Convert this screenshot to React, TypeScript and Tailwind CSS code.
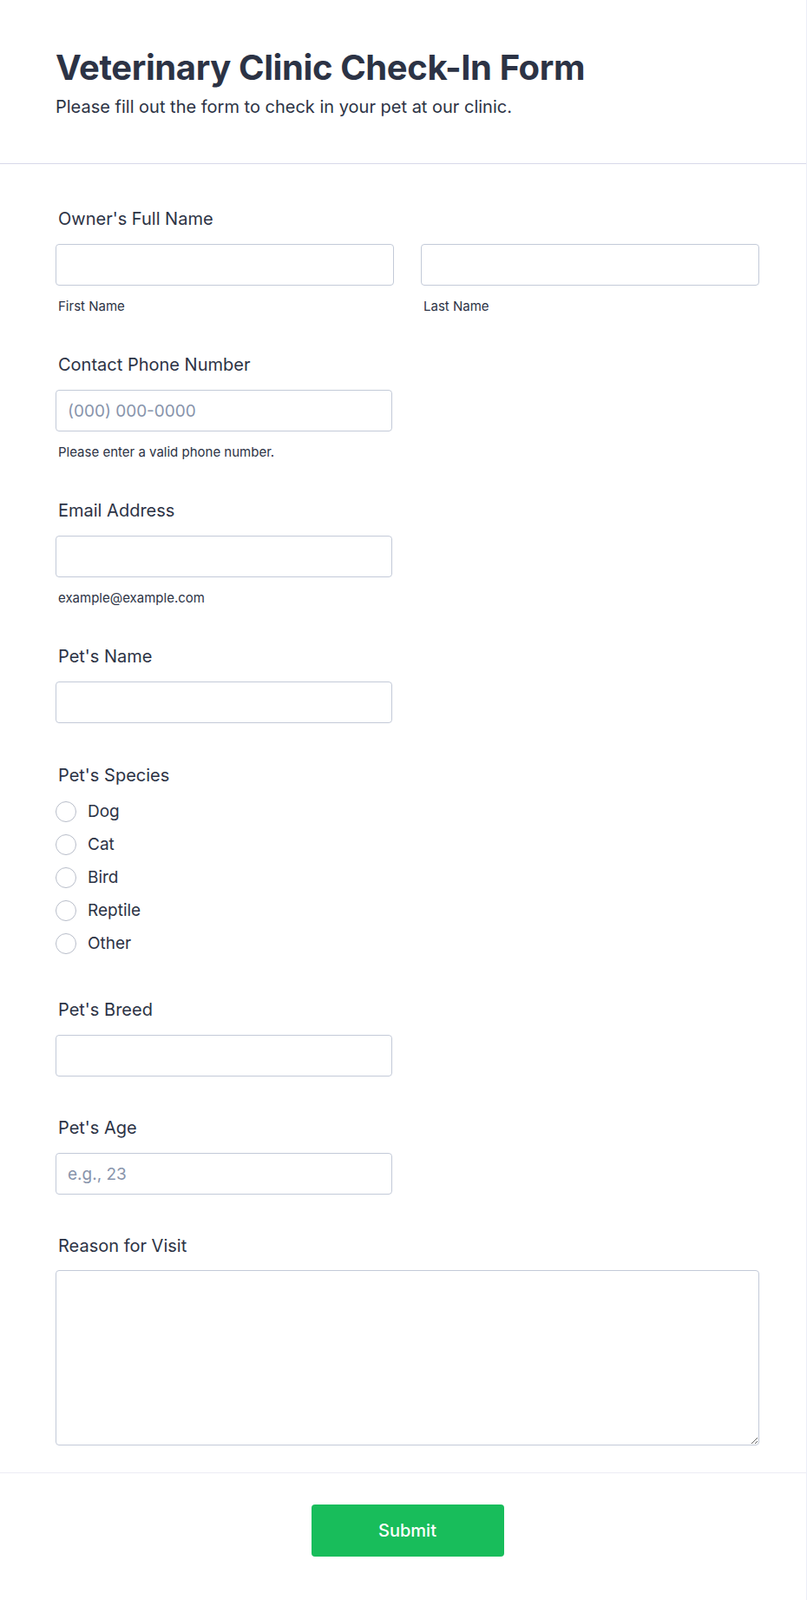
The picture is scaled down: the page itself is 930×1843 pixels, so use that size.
import React from "react";

const textColor = "text-[#2c3345]";

const FieldLabel = ({ children }: { children: React.ReactNode }) => (
  <label className={`block text-[20px] font-normal leading-6 ${textColor}`}>
    {children}
  </label>
);

const SubLabel = ({ children }: { children: React.ReactNode }) => (
  <p className={`mt-[14px] pl-[3px] text-[15px] leading-5 ${textColor}`}>
    {children}
  </p>
);

const TextInput = ({ placeholder }: { placeholder?: string }) => (
  <input
    type="text"
    placeholder={placeholder}
    className="block h-12 w-full rounded-[4px] border border-[#c3cad8] bg-white px-[13px] text-[19px] text-[#2c3345] outline-none placeholder:text-[#8894ab]"
  />
);

const species = ["Dog", "Cat", "Bird", "Reptile", "Other"];

export default function App() {
  return (
    <div className="min-h-[1843px] w-full border-r border-[#eceef7] bg-white font-['Inter','Noto_Sans',sans-serif]">
      <header className="border-b border-[#d8d9ea] pb-[53px] pl-16 pr-[54px] pt-[54px]">
        <h1
          className={`text-[40px] font-bold leading-[48px] tracking-[-0.4px] ${textColor}`}
        >
          Veterinary Clinic Check-In Form
        </h1>
        <p className={`mt-[9px] text-[20px] font-normal leading-6 ${textColor}`}>
          Please fill out the form to check in your pet at our clinic.
        </p>
      </header>

      <form className="pl-16 pr-[54px] pt-[51px]">
        {/* owner */}
        <div>
          <div className="pl-[3px]">
            <FieldLabel>Owner's Full Name</FieldLabel>
          </div>
          <div className="mt-[17px] grid grid-cols-2 gap-[31px]">
            <div>
              <TextInput />
              <SubLabel>First Name</SubLabel>
            </div>
            <div>
              <TextInput />
              <SubLabel>Last Name</SubLabel>
            </div>
          </div>
        </div>

        <div className="mt-[45px] w-[388px]">
          <div className="pl-[3px]">
            <FieldLabel>Contact Phone Number</FieldLabel>
          </div>
          <div className="mt-[17px]">
            <TextInput placeholder="(000) 000-0000" />
          </div>
          <SubLabel>Please enter a valid phone number.</SubLabel>
        </div>

        <div className="mt-[45px] w-[388px]">
          <div className="pl-[3px]">
            <FieldLabel>Email Address</FieldLabel>
          </div>
          <div className="mt-[17px]">
            <TextInput />
          </div>
          <SubLabel>example@example.com</SubLabel>
        </div>

        <div className="mt-[45px] w-[388px]">
          <div className="pl-[3px]">
            <FieldLabel>Pet's Name</FieldLabel>
          </div>
          <div className="mt-[17px]">
            <TextInput />
          </div>
        </div>

        <div className="mt-[48px]">
          <div className="pl-[3px]">
            <FieldLabel>Pet's Species</FieldLabel>
          </div>
          <div className="mt-[18px] flex flex-col gap-[14px]">
            {species.map((s) => (
              <label key={s} className="flex h-6 items-center gap-[13px]">
                <span className="h-6 w-6 shrink-0 rounded-full border-[1.5px] border-[#b8bdc9] bg-white" />
                <span className={`text-[19px] leading-6 ${textColor}`}>{s}</span>
              </label>
            ))}
          </div>
        </div>

        <div className="mt-[52px] w-[388px]">
          <div className="pl-[3px]">
            <FieldLabel>Pet's Breed</FieldLabel>
          </div>
          <div className="mt-[17px]">
            <TextInput />
          </div>
        </div>

        <div className="mt-[47px] w-[388px]">
          <div className="pl-[3px]">
            <FieldLabel>Pet's Age</FieldLabel>
          </div>
          <div className="mt-[17px]">
            <TextInput placeholder="e.g., 23" />
          </div>
        </div>

        <div className="mt-[47px]">
          <div className="pl-[3px]">
            <FieldLabel>Reason for Visit</FieldLabel>
          </div>
          <textarea className="mt-[16px] block h-[202px] w-full rounded-[4px] border border-[#c3cad8] bg-white px-[13px] py-2 text-[19px] text-[#2c3345] outline-none" />
        </div>
      </form>

      <div className="mt-[31px] border-t border-[#ebecf4] pb-[50px] pl-16 pr-[54px] pt-[36px]">
        <div className="flex justify-center">
          <button
            type="button"
            className="h-[60px] w-[222px] rounded-[4px] bg-[#18bd5b] text-[20px] font-medium text-white"
          >
            Submit
          </button>
        </div>
      </div>
    </div>
  );
}
